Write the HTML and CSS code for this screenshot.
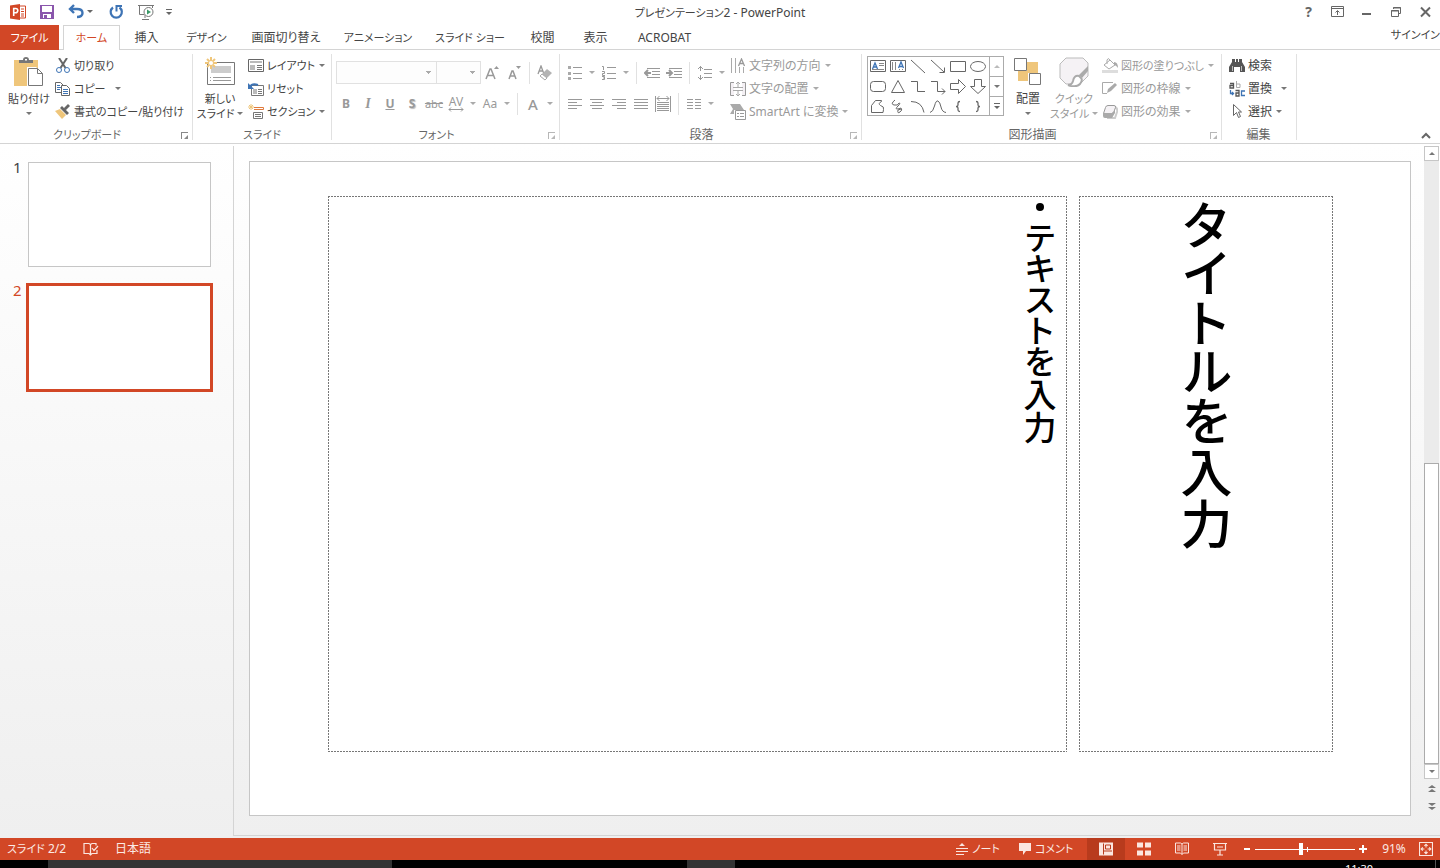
FILE: index.html
```html
<!DOCTYPE html>
<html lang="ja">
<head>
<meta charset="utf-8">
<title>プレゼンテーション2 - PowerPoint</title>
<link rel="stylesheet" href="styles.css">
</head>
<body>
<div class="app">
  <header class="titlebar">
    <div class="quick">
      <svg class="i16" viewBox="0 0 16 16"><path d="M9 2h6.500v12H9z" fill="#fff" stroke="#d24726"/><path d="M0 1.500 10 0v16L0 14.500z" fill="#d24726"/><path d="M3.700 12V4.500h2a2 2 0 0 1 0 4.200h-2" fill="none" stroke="#fff" stroke-width="1.600"/><path d="M11 5h3M11 7.500h3M11 10h3M11 12h3" stroke="#d24726"/></svg>
      <button class="qbtn q-save" aria-label="保存"><svg class="i14" viewBox="0 0 14 14"><path d="M0 0h14v14H0z" fill="#8a56ac"/><path d="M2 1h10v6H2zM3 9h8v4H3z" fill="#fff"/><path d="M4 10h3v3H4z" fill="#8a56ac"/></svg></button>
      <button class="qbtn q-undo" aria-label="元に戻す"><svg class="i16" viewBox="0 0 16 16"><path d="M6 1 2 5l4 4M2 5h7q5.500 0 5.500 4T9 13" fill="none" stroke="#3e74b5" stroke-width="2.400"/></svg></button>
      <button class="arr dark" aria-label="元に戻す一覧"></button>
      <button class="qbtn q-redo" aria-label="繰り返し"><svg class="i16" viewBox="0 0 16 16"><path d="M5 3.500A5.600 5.600 0 1 0 11.500 3.500" fill="none" stroke="#3e74b5" stroke-width="2.200"/><path d="M8.500 7.500V2H14" fill="none" stroke="#3e74b5" stroke-width="2"/></svg></button>
      <button class="qbtn q-show" aria-label="スライドショー"><svg class="i16" viewBox="0 0 16 16"><path d="M0 1.500h16M1.500 2v8.500H6M7 11v3M4 15.500h7M14.500 2v2" fill="none" stroke="#777"/><circle cx="10.500" cy="8" r="4.500" fill="#fff" stroke="#777"/><path d="M9 5.500 13 8l-4 2.500z" fill="#3a9a68"/></svg></button>
      <button class="custom" aria-label="クイック アクセスのカスタマイズ"></button>
    </div>
    <h1 class="title"><span class="kana">プレゼンテーション</span>2 - PowerPoint</h1>
    <div class="winbtns">
      <button aria-label="ヘルプ" class="help">?</button>
      <button aria-label="リボンの表示オプション"><svg class="i14" viewBox="0 0 14 12"><path d="M.5.500h12v10H.5zM1 2.500h12M6.500 9V5M4.500 6.500l2-2 2 2" fill="none" stroke="#666"/></svg></button>
      <button aria-label="最小化"><svg class="i14" viewBox="0 0 14 12"><path d="M2 7h9v2H2z" fill="#666"/></svg></button>
      <button aria-label="元のサイズに戻す"><svg class="i14" viewBox="0 0 14 12"><path d="M4.500 3V1.500h7v6H10M2.500 4.500h7v6h-7zM4 2h8M2 5h8" fill="none" stroke="#666"/></svg></button>
      <button aria-label="閉じる"><svg class="i14" viewBox="0 0 14 12"><path d="m3 1.500 9 9m0-9-9 9" fill="none" stroke="#666" stroke-width="2"/></svg></button>
    </div>
  </header>
  <nav class="tabs">
    <button class="tab file kana">ファイル</button>
    <button class="tab t57 active kana">ホーム</button>
    <button class="tab t53">挿入</button>
    <button class="tab t67 kana">デザイン</button>
    <button class="tab t92">画面切り替え</button>
    <button class="tab t92 kana">アニメーション</button>
    <button class="tab t92 kana">スライド ショー</button>
    <button class="tab t53">校閲</button>
    <button class="tab t53">表示</button>
    <button class="tab t85">ACROBAT</button>
    <a class="signin kana" href="#">サインイン</a>
  </nav>
  <section class="ribbon">
    <div class="group g-clip">
      <div class="body">
        <button class="big w54 paste">
          <svg class="i30" viewBox="0 0 30 30"><path d="M0 3h24v26H0z" fill="#efc67b"/><path d="M5 6V3h4q0-3 3-3t3 3h4v3z" fill="#777"/><path d="M11 2h2v1.500h-2z" fill="#fff"/><path d="M13 10h9l7 6v14H13z" fill="#fff"/><path d="M14.500 11.500h9l5 5v12h-14zM23.500 11.500v5h5" fill="#fff" stroke="#777"/></svg>
          <span class="kana">貼り付け</span><i class="tri"></i></button>
        <div class="rows">
          <button class="row kana"><svg class="i16" viewBox="0 0 16 16"><path d="m4 0 6.500 10M12 0 5.500 10" stroke="#666" stroke-width="2" fill="none"/><circle cx="4" cy="12" r="2.500" fill="#fff" stroke="#3e74b5"/><circle cx="12" cy="12" r="2.500" fill="#fff" stroke="#3e74b5"/></svg><span>切り取り</span></button>
          <button class="row kana"><svg class="i16" viewBox="0 0 16 16"><path d="M.5 1.500h5L8 4v7.500H.5z" fill="#fff" stroke="#666"/><path d="M2 4.500h3M2 6.500h4M2 8.500h3" stroke="#3e74b5"/><path d="M6.500 4.500h5l3 3v7h-8z" fill="#fff" stroke="#666"/><path d="M8 8.500h5M8 10.500h5M8 12.500h5" stroke="#3e74b5"/></svg><span>コピー</span><i class="tri far"></i></button>
          <button class="row kana"><svg class="i16" viewBox="0 0 16 16"><path d="m0 7 5-2 6 6-4 4z" fill="#efc67b"/><path d="m5 4 2-2 7 7-2 2zM9 4l4-4 2 2-4 4z" fill="#666"/></svg><span>書式のコピー/貼り付け</span></button>
        </div>
      </div>
      <div class="label kana">クリップボード<i class="launch"></i></div>
    </div>
    <div class="group g-slide">
      <div class="body">
        <button class="big w54 kana">
          <svg class="i30" viewBox="0 0 30 30"><path d="M2.500 5.500h27v22h-27z" fill="#fff" stroke="#777"/><path d="M6 9h20v7H6z" fill="#ccc"/><path d="M8 20.500h18M8 23.500h18M5 20.500h1M5 23.500h1" stroke="#999"/><path d="M6 0v12M0 6h12M2 2l8 8M10 2l-8 8" stroke="#efc67b" stroke-width="2"/><circle cx="6" cy="6" r="2" fill="#fff"/></svg>
          <span>新しい</span><span>スライド<i class="tri"></i></span></button>
        <div class="rows">
          <button class="row kana"><svg class="i16" viewBox="0 0 16 16"><path d="M.5 1.500h15v12H.500z" fill="#fff" stroke="#666"/><path d="M2 3h12v2H2zM2 7h5v5H2z" fill="#bbb"/><path d="M9 7.500h5M9 9.500h5M9 11.500h5" stroke="#777"/></svg><span>レイアウト</span><i class="tri"></i></button>
          <button class="row kana"><svg class="i16" viewBox="0 0 16 16"><path d="M3.500 4.500h12v10h-12z" fill="#fff" stroke="#777"/><path d="M5 8h4v5H5z" fill="#bbb"/><path d="M10 8.500h4M10 10.500h4M10 12.500h4" stroke="#777"/><path d="M2 6Q4 2 10 4" fill="none" stroke="#3e74b5" stroke-width="2"/><path d="M0 2v6h6z" fill="#3e74b5"/></svg><span>リセット</span></button>
          <button class="row kana"><svg class="i16" viewBox="0 0 16 16"><path d="M6 3.500h9.500v2H6" fill="none" stroke="#e07a3c"/><path d="M5.500 8.500h9v6h-9zM7 10.500h6M7 12.500h6" fill="none" stroke="#777"/><path d="M3 0v6M0 3h6M1 1l4 4M5 1 1 5" stroke="#efc67b"/></svg><span>セクション</span><i class="tri"></i></button>
        </div>
      </div>
      <div class="label kana">スライド</div>
    </div>
    <div class="group g-font off">
      <div class="body two">
        <div class="tools">
          <select class="combo face" aria-label="フォント" disabled><option></option></select>
          <select class="combo size" aria-label="フォント サイズ" disabled><option></option></select>
          <button class="tool" disabled aria-label="拡大"><svg class="i16" viewBox="0 0 16 16"><path d="m2 14 4-10h1l4 10M3.500 10.500h6" fill="none" stroke="#999" stroke-width="1.500"/><path d="M10 4h5l-2.500-3z" fill="#999"/></svg></button>
          <button class="tool" disabled aria-label="縮小"><svg class="i16" viewBox="0 0 16 16"><path d="m3 14 3-8h1l3 8M4 11h5" fill="none" stroke="#999" stroke-width="1.500"/><path d="M10 1h5l-2.500 3z" fill="#999"/></svg></button>
          <i class="sep"></i>
          <button class="tool" disabled aria-label="書式のクリア"><svg class="i16" viewBox="0 0 16 16"><path d="m1 9 3-8 3 8M2 6h4" fill="none" stroke="#999" stroke-width="1.300"/><path d="m3 11 7-7 5 4-7 7z" fill="#b3b3b3"/><path d="m3 11 2-2 5 4-2 2z" fill="#fff" stroke="#aaa"/></svg></button>
        </div>
        <div class="tools">
          <button class="tool" disabled><b>B</b></button><button class="tool it" disabled><b>I</b></button><button class="tool" disabled><b><u>U</u></b></button><button class="tool sh" disabled><b>S</b></button><button class="tool small" disabled><s>abc</s></button>
          <button class="tool av" disabled>AV<svg viewBox="0 0 16 5"><path d="M1 2.500h14M3 .5l-2 2 2 2M13 .5l2 2-2 2" fill="none" stroke="#999"/></svg></button><button class="arr" disabled aria-label="文字の間隔"></button>
          <button class="tool" disabled>Aa</button><button class="arr" disabled aria-label="文字種"></button><i class="sep"></i>
          <button class="tool color" disabled>A</button><button class="arr" disabled aria-label="フォントの色"></button>
        </div>
      </div>
      <div class="label kana">フォント<i class="launch"></i></div>
    </div>
    <div class="group g-para off">
      <div class="body">
        <div class="two fixed">
        <div class="tools">
          <button class="tool" disabled aria-label="箇条書き"><svg class="i14" viewBox="0 0 14 14"><path d="M5 1.500h9M5 7.500h9M5 12.500h9" stroke="#999"/><path d="M0 0h3v3H0zM0 6h3v3H0zM0 11h3v3H0z" fill="#aaa"/></svg></button><button class="arr" disabled aria-label="行頭文字"></button>
          <button class="tool" disabled aria-label="段落番号"><svg class="i14" viewBox="0 0 14 14"><path d="M5 1.500h9M5 7.500h9M5 12.500h9M0 .5h1.500V4M0 5.500h2.500v2H.5v2H3M0 10.500h2.500v3H0M1 12h1.500" fill="none" stroke="#999"/></svg></button><button class="arr" disabled aria-label="番号書式"></button>
          <i class="sep"></i>
          <button class="tool" disabled aria-label="インデントを減らす"><svg class="i16" viewBox="0 0 16 14"><path d="M3 2.500h13M8 5.500h8M8 8.500h8M3 11.500h13" stroke="#999"/><path d="M7 7H1M4 4 1 7l3 3" stroke="#999" stroke-width="2" fill="none"/></svg></button>
          <button class="tool" disabled aria-label="インデントを増やす"><svg class="i16" viewBox="0 0 16 14"><path d="M3 2.500h13M8 5.500h8M8 8.500h8M3 11.500h13" stroke="#999"/><path d="M0 7h6M3 4l3 3-3 3" stroke="#999" stroke-width="2" fill="none"/></svg></button>
          <i class="sep"></i>
          <button class="tool" disabled aria-label="行間"><svg class="i16" viewBox="0 0 16 16"><path d="M7 4.500h8M7 8.500h8M7 12.500h8M3.500 1v5M3.500 10v5M1 4l2.500-2.500L6 4M1 12l2.500 2.500L6 12" fill="none" stroke="#999"/></svg></button><button class="arr" disabled aria-label="行間一覧"></button>
        </div>
        <div class="tools">
          <button class="tool" disabled aria-label="左揃え"><svg class="i14" viewBox="0 0 14 12"><path d="M0 1.500h14M0 4.500h9M0 7.500h14M0 10.500h9" stroke="#999"/></svg></button>
          <button class="tool" disabled aria-label="中央揃え"><svg class="i14" viewBox="0 0 14 12"><path d="M0 1.500h14M2 4.500h10M0 7.500h14M2 10.500h10" stroke="#999"/></svg></button>
          <button class="tool" disabled aria-label="右揃え"><svg class="i14" viewBox="0 0 14 12"><path d="M0 1.500h14M5 4.500h9M0 7.500h14M5 10.500h9" stroke="#999"/></svg></button>
          <button class="tool" disabled aria-label="両端揃え"><svg class="i14" viewBox="0 0 14 12"><path d="M0 1.500h14M0 4.500h14M0 7.500h14M0 10.500h14" stroke="#999"/></svg></button>
          <button class="tool" disabled aria-label="均等割り付け"><svg class="i16" viewBox="0 0 16 16"><path d="M.5 0v16M15.500 0v16M2 6.500h12M2 8.500h12M2 10.500h12M2 12.500h12M2 14.500h12M2 2.500h12M4.500 0 2 2.500 4.500 5M11.500 0 14 2.500 11.500 5" fill="none" stroke="#999"/></svg></button>
          <i class="sep"></i>
          <button class="tool" disabled aria-label="段組み"><svg class="i14" viewBox="0 0 14 12"><path d="M0 1.500h6M0 4.500h6M0 7.500h6M0 10.500h6M8 1.500h6M8 4.500h6M8 7.500h6M8 10.500h6" stroke="#999"/></svg></button><button class="arr" disabled aria-label="段組み一覧"></button>
        </div>
        </div>
        <div class="rows">
          <button class="row" disabled><svg class="i16" viewBox="0 0 16 16"><path d="M1.500 0v15M5.500 0v15M9.500 9v6M13.500 9v6" stroke="#aaa"/><path d="m8.500 8 3-7 3 7M9.500 5.500h4" fill="none" stroke="#999" stroke-width="1.300"/></svg><span>文字列の方向</span><i class="tri"></i></button>
          <button class="row" disabled><svg class="i16" viewBox="0 0 16 16"><path d="M4 1.500H.5v13H4M12 1.500h3.500v13H12" fill="#f4f0f4" stroke="#999"/><path d="M3 6.500h10M3 9.500h10M8 6V1M6 3l2-2 2 2M8 10v5M6 13l2 2 2-2" fill="none" stroke="#aaa"/></svg><span>文字の配置</span><i class="tri"></i></button>
          <button class="row" disabled><svg class="i16" viewBox="0 0 16 16"><path d="M0 0h10l4 6H4v4H0l3-5z" fill="#aaa"/><path d="M5.500 6.500h10v9h-10z" fill="#fff" stroke="#999"/><path d="M7 9.500h2M10 9.500h4M7 12.500h2M10 12.500h4" stroke="#999"/></svg><span>SmartArt に変換</span><i class="tri"></i></button>
        </div>
      </div>
      <div class="label">段落<i class="launch"></i></div>
    </div>
    <div class="group g-draw">
      <div class="body">
        <div class="gallery">
          <div class="shapes">
            <svg viewBox="0 0 20 20"><path d="M2.500 3.500h15v11h-15z" fill="none" stroke="#666"/><path d="m4.500 12 2.500-6 2.500 6M5 10h4" fill="none" stroke="#3e74b5" stroke-width="1.300"/><path d="M11 6.500h5M11 8.500h5M4 12.500h12" stroke="#888"/></svg>
            <svg viewBox="0 0 20 20"><path d="M2.500 3.500h15v11h-15z" fill="none" stroke="#666"/><path d="m10.500 11 2.500-6 2.500 6M11 9.500h4" fill="none" stroke="#3e74b5" stroke-width="1.300"/><path d="M4.500 5v8M7.500 5v8M11.500 12v1M14.500 12v1" stroke="#888"/></svg>
            <svg viewBox="0 0 20 20"><path d="m3 3 14 13" fill="none" stroke="#666"/></svg>
            <svg viewBox="0 0 20 20"><path d="m3 3 13 12M16.500 10.500v5h-5" fill="none" stroke="#666"/></svg>
            <svg viewBox="0 0 20 20"><path d="M2.500 4.500h15v10h-15z" fill="none" stroke="#666"/></svg>
            <svg viewBox="0 0 20 20"><ellipse cx="10" cy="9.500" rx="7.500" ry="5" fill="none" stroke="#666"/></svg>
            <svg viewBox="0 0 20 20"><rect x="2.500" y="4.500" width="15" height="10" rx="3" fill="none" stroke="#666"/></svg>
            <svg viewBox="0 0 20 20"><path d="M10 3.500 16.500 15.500h-13z" fill="none" stroke="#666"/></svg>
            <svg viewBox="0 0 20 20"><path d="M3 4.500h6.500v10H17" fill="none" stroke="#666"/></svg>
            <svg viewBox="0 0 20 20"><path d="M3 4.500h6.500v10H17M14 11.500l3 3-3 3" fill="none" stroke="#666"/></svg>
            <svg viewBox="0 0 20 20"><path d="M2.500 6.500h8v-4l7 7-7 7v-4h-8z" fill="none" stroke="#666"/></svg>
            <svg viewBox="0 0 20 20"><path d="M6.500 2.500h7v7h4l-7.500 7-7.500-7h4z" fill="none" stroke="#666"/></svg>
            <svg viewBox="0 0 20 20"><path d="M15 15.500H3.500v-7l4-5h6v1q-4 2-1 4 4 1 3 4z" fill="none" stroke="#666"/></svg>
            <svg viewBox="0 0 20 20"><path d="M7 3Q2 7 6 8t5-2q2 0-1 3t-1 3 4-1q2 2-1 4t-2-2l3-1" fill="none" stroke="#666"/></svg>
            <svg viewBox="0 0 20 20"><path d="M3 4.500q11 0 13 11" fill="none" stroke="#666"/></svg>
            <svg viewBox="0 0 20 20"><path d="M2 15.500Q5 15 6.500 9t3.500-5q2 1 3 6t5 5.500" fill="none" stroke="#666"/></svg>
            <svg viewBox="0 0 20 20"><path d="M12 4.500q-2 0-2 1.500v2q0 1.500-2 1.500 2 0 2 1.500v2q0 1.500 2 1.500" fill="none" stroke="#666" stroke-width="1.300"/></svg>
            <svg viewBox="0 0 20 20"><path d="M8 4.500q2 0 2 1.500v2q0 1.500 2 1.500-2 0-2 1.500v2q0 1.500-2 1.500" fill="none" stroke="#666" stroke-width="1.300"/></svg>
          </div>
          <div class="gscroll"><button aria-label="上へ"><i class="tri up"></i></button><button aria-label="下へ"><i class="tri"></i></button><button aria-label="その他"><i class="more"></i></button></div>
        </div>
        <button class="big w46">
          <svg class="i30" viewBox="0 0 30 30"><path d="M14 5h11v11H14zM5 14h10v10H5z" fill="#efc67b"/><path d="M1.500 1.500h12v12h-12zM16.500 16.500h11v11h-11z" fill="#fff" stroke="#777"/></svg>
          <span>配置</span><i class="tri"></i></button>
        <button class="big w46 grey kana" disabled>
          <svg class="i30" viewBox="0 0 30 30"><path d="M7 1h17l5 5v13l-8 8H7l-6-6V7z" fill="#f5f2f5" stroke="#bbb"/><path d="m29 9-9 9 3 3 6-7z" fill="#aaa"/><path d="M20 19q-5-1-6 5-1 4-5 4 8 3 12-1 3-4 1-6z" fill="#fff" stroke="#aaa" stroke-width="2"/></svg>
          <span>クイック</span><span>スタイル<i class="tri"></i></span></button>
        <div class="rows grey">
          <button class="row" disabled><svg class="i16" viewBox="0 0 16 16"><path d="M0 12h16v3H0z" fill="#ddd"/><path d="m2 7 6-5 5 5-6 4zM8 2q-2-3-3 0v4" fill="#fff" stroke="#aaa"/><path d="M12 4q4 0 4 6-2-3-4-3z" fill="#aaa"/></svg><span class="kana">図形の塗りつぶし</span><i class="tri"></i></button>
          <button class="row" disabled><svg class="i16" viewBox="0 0 16 16"><path d="M11 1.500H.5v11H5" fill="none" stroke="#aaa"/><path d="m5 12 1-4 7-6 2 2-6 6z" fill="#aaa"/></svg><span>図形の枠線</span><i class="tri"></i></button>
          <button class="row" disabled><svg class="i16" viewBox="0 0 16 16"><path d="M13 3q3 1 2 5l-2 6H5" fill="none" stroke="#ccc" stroke-width="2"/><path d="M6 1.500h6q2 0 1.500 2l-1.500 4q-1 2-2 2H1.500l2-6Q4 1.500 6 1.500z" fill="#f5f2f5" stroke="#999"/><path d="M1 9h9l3-3v3l-3 5H3q-2 0-2-2z" fill="#aaa"/></svg><span>図形の効果</span><i class="tri"></i></button>
        </div>
      </div>
      <div class="label">図形描画<i class="launch"></i></div>
    </div>
    <div class="group g-edit">
      <div class="body"><div class="rows">
        <button class="row"><svg class="i16" viewBox="0 0 16 16"><path d="M3 1h3v3h1V1h2v3h1V1h3v3l3 5v5h-5V9H5v5H0V9l3-5z" fill="#555"/><path d="M3.500 8v5M12.500 8v5" stroke="#bbb"/></svg><span>検索</span></button>
        <button class="row"><svg class="i16" viewBox="0 0 16 16"><g fill="none" stroke="#555" stroke-width="1.300"><path d="M1 2.500h3.500V7H1V4.500h3.500M6.500 9.500H10V15H7v-3h3"/></g><path d="M7.500 0v6.500H11V3H7.500" fill="none" stroke="#aaa"/><path d="M16 10h-3.500v4.500H16M1.500 9v3.500H4M3 11l1.500 1.500L3 14" fill="none" stroke="#3e74b5" stroke-width="1.300"/></svg><span>置換</span><i class="tri far"></i></button>
        <button class="row"><svg class="i16" viewBox="0 0 16 16"><path d="M4.500.5v11l3-3 2 5 2-1-2-4.500h3z" fill="#fff" stroke="#666"/></svg><span>選択</span><i class="tri"></i></button>
      </div></div>
      <div class="label">編集</div>
    </div>
    <button class="collapse" aria-label="リボンを折りたたむ"><svg viewBox="0 0 10 7"><path d="m1 6 4-4 4 4" fill="none" stroke="#666" stroke-width="2"/></svg></button>
  </section>
  <main class="work">
    <aside class="thumbs">
      <div class="thumb"><span>1</span><button class="mini" aria-label="スライド 1"></button></div>
      <div class="thumb sel"><span>2</span><button class="mini" aria-label="スライド 2"></button></div>
    </aside>
    <div class="stage">
      <article class="slide">
        <ul class="holder text"><li>テキストを入力</li></ul>
        <h2 class="holder heading">タイトルを入力</h2>
      </article>
      <div class="scroll">
        <button class="sbtn" aria-label="上へスクロール"><i class="tri up"></i></button>
        <div class="track"><div class="knob"></div></div>
        <button class="sbtn" aria-label="下へスクロール"><i class="tri"></i></button>
        <button class="jump" aria-label="前のスライド"><i class="tri up"></i><i class="tri up"></i></button>
        <button class="jump" aria-label="次のスライド"><i class="tri"></i><i class="tri"></i></button>
      </div>
    </div>
  </main>
  <footer class="status">
    <span class="count"><span class="kana">スライド</span> 2/2</span>
    <button class="spell" aria-label="スペルチェック"><svg class="i16" viewBox="0 0 16 14"><path d="M7.500 12V2.500L6 1.500H1v10h5l1.500 1.500 1.500-1.500h2M7.500 2.500 9 1.500h4v2M9 6l2 2.500L15 4M14 8v3.500h-4" fill="none" stroke="#fbe6e0" stroke-width="1.200"/></svg></button>
    <span class="lang">日本語</span>
    <button class="note kana"><svg class="i12" viewBox="0 0 12 12"><path d="M3 3h6L6 0zM0 5h12v1H0zM0 8h12v1H0zM0 11h8v1H0z" fill="#fbe6e0"/></svg>ノート</button>
    <button class="comment kana"><svg class="i12" viewBox="0 0 12 12"><path d="M0 0h12v8H7l-3 4V8H0z" fill="#fbe6e0"/></svg>コメント</button>
    <button class="view on" aria-label="標準"><svg class="i14" viewBox="0 0 14 13"><path d="M0 0h14v13H0z" fill="#fbe6e0"/><path d="M4 1h1v11H4zM5 8h8v1H5z" fill="#b83b1d"/><path d="M6.500 2.500h5v4h-5z" fill="#fbe6e0" stroke="#b83b1d"/></svg></button>
    <button class="view" aria-label="スライド一覧"><svg class="i14" viewBox="0 0 14 13"><path d="M0 0h6v5H0zM8 0h6v5H8zM0 8h6v5H0zM8 8h6v5H8z" fill="#fbe6e0"/></svg></button>
    <button class="view" aria-label="閲覧表示"><svg class="i14" viewBox="0 0 14 13"><path d="M.5.500h5L7 1.500 8.500.500h5v10h-5L7 12 5.500 10.500h-5zM7 1.500V12M2 3.500h3.500M2 5.500h3.500M2 7.500h3.500M8.500 3.500H12M8.500 5.500H12M8.500 7.500H12" fill="none" stroke="#fbe6e0"/></svg></button>
    <button class="view" aria-label="スライド ショー"><svg class="i14" viewBox="0 0 14 13"><path d="M0 1h14M1.500 1.500v6h11v-6M4 4.500h6M7 8v4M4 12.500h6" fill="none" stroke="#fbe6e0" stroke-width="1.200"/></svg></button>
    <button class="zbtn" aria-label="縮小"><svg viewBox="0 0 8 8"><path d="M1 3h6v2H1z" fill="#fff"/></svg></button>
    <input class="zoom" type="range" aria-label="ズーム" min="0" max="100" value="46">
    <button class="zbtn" aria-label="拡大"><svg viewBox="0 0 8 8"><path d="M0 3h3V0h2v3h3v2H5v3H3V5H0z" fill="#fff"/></svg></button>
    <button class="pct">91%</button>
    <button class="fit" aria-label="ウィンドウに合わせる"><svg class="i14" viewBox="0 0 13 13"><path d="M.5.500h12v12H.5zM6.500 2v3M6.500 8v3M2 6.500h3M8 6.500h3M5 3.500l1.500-1.500L8 3.500M5 9.500 6.500 11 8 9.500M3.500 5 2 6.500 3.500 8M9.500 5 11 6.500 9.500 8" fill="none" stroke="#fbe6e0"/></svg></button>
  </footer>
  <div class="taskbar"><i class="search"></i><i class="task"></i><span class="clock">11:30</span><i class="peek"></i></div>
</div>
</body>
</html>
```
FILE: styles.css
```css
* { box-sizing: border-box; }
html, body { height: 100%; margin: 0; }
body { font: 12px/16px "Noto Sans", "Noto Sans CJK JP", sans-serif; font-feature-settings: "palt"; color: #444; overflow: hidden; }
button { font: inherit; font-feature-settings: inherit; color: inherit; background: none; border: 0; padding: 0; margin: 0; white-space: nowrap; }
svg { display: block; flex: none; }
.kana { font-size: 11px; }
.i12 { width: 12px; height: 12px; }
.i14 { width: 14px; height: 14px; }
.i16 { width: 16px; height: 16px; }
.i30 { width: 30px; height: 30px; }
.app { display: flex; flex-direction: column; height: 100vh; background: #fff; }

.tri { display: inline-block; flex: none; width: 6px; height: 3px; border: solid transparent; border-width: 3px 3px 0; border-top-color: #777; }
.tri.up { border-width: 0 3px 3px; border-bottom-color: #777; }
.arr { width: 12px; height: 20px; display: flex; align-items: center; justify-content: center; }
.arr::after { content: ""; border: solid transparent; border-width: 3px 3px 0; border-top-color: #aaa; }
.arr.dark::after { border-top-color: #666; }

.titlebar { display: grid; grid-template-columns: 1fr auto 1fr; align-items: center; height: 25px; flex: none; }
.quick { display: flex; align-items: center; padding: 0 0 2px 10px; }
.qbtn { display: flex; }
.q-save, .q-undo, .q-show { margin-left: 14px; }
.q-redo { margin-left: 12px; }
.custom { margin-left: 12px; width: 6px; height: 6px; border-top: 1px solid #666; display: flex; align-items: flex-end; }
.custom::after { content: ""; border: solid transparent; border-width: 3px 3px 0; border-top-color: #666; }
.title { margin: 0; font: inherit; font-feature-settings: inherit; }
.winbtns { display: flex; justify-content: flex-end; padding: 0 1px 2px 0; }
.winbtns button { width: 29px; height: 22px; display: flex; align-items: center; justify-content: center; }
.winbtns .help { font-size: 14px; font-weight: 700; color: #666; }

.tabs { display: flex; height: 25px; flex: none; border-bottom: 1px solid #d4d4d4; }
.tab { height: 25px; text-align: center; }
.file { width: 59px; margin-right: 4px; background: #d24726; color: #fff; }
.active { background: #fff; border: 1px solid #d4d4d4; border-bottom: 0; color: #d24726; }
.t53 { width: 53px; }
.t57 { width: 57px; }
.t67 { width: 67px; }
.t85 { width: 85px; }
.t92 { width: 92px; }
.signin { margin-left: auto; color: #444; text-decoration: none; white-space: nowrap; line-height: 20px; }

.ribbon { display: flex; height: 94px; flex: none; padding: 4px 0 3px; border-bottom: 1px solid #d4d4d4; }
.group { display: flex; flex-direction: column; flex: none; border-right: 1px solid #e1e1e1; }
.g-clip { width: 193px; }
.g-slide { width: 139px; }
.g-font { width: 228px; }
.g-para { width: 302px; }
.g-draw { width: 360px; }
.g-edit { width: 75px; padding-left: 6px; }
.body { display: flex; height: 69px; flex: none; }
.label { position: relative; text-align: center; line-height: 23px; color: #666; padding-right: 18px; }
.g-slide .label { padding-right: 0; }
.g-edit .label { padding-right: 7px; }
.launch { position: absolute; right: 4px; bottom: 7px; width: 7px; height: 7px; border: solid #888; border-width: 1px 0 0 1px; }
.launch::after { content: ""; position: absolute; right: 0; bottom: 0; border: 2px solid #888; border-top-color: transparent; border-left-color: transparent; }
.off .launch, .g-draw .launch { opacity: .6; }
.big { display: flex; flex-direction: column; align-items: center; padding-top: 3px; line-height: 15px; }
.big svg { margin-bottom: 4px; }
.big > .tri { margin-top: 6px; }
.big span { display: flex; align-items: center; gap: 3px; }
.w54 { width: 54px; }
.w46 { width: 46px; }
.paste { padding-left: 4px; }
.grey, .off .row { color: #999; }
.grey .tri, .off .tri { border-top-color: #aaa; }
.rows { display: flex; flex-direction: column; align-items: flex-start; padding-left: 1px; }
.w46 + .rows { padding-left: 5px; }
.row { display: flex; align-items: center; gap: 3px; height: 23px; }
.row .tri { margin-left: 1px; }
.row .far { margin-left: 6px; }

.two { display: flex; flex-direction: column; padding: 3px 0 0 3px; }
.fixed { width: 169px; flex: none; padding-left: 4px; }
.tools { display: flex; align-items: center; height: 31px; color: #999; }
.tool { width: 22px; height: 22px; display: flex; align-items: center; justify-content: center; flex: none; }
.tool.it { font-family: "Liberation Serif", serif; font-style: italic; font-size: 14px; }
.sh { text-shadow: 1px 1px 1px #bbb; }
.small { font-size: 11px; }
.av { flex-direction: column; line-height: 11px; }
.av svg { width: 16px; height: 5px; }
.color { font-size: 15px; font-weight: 500; }
.sep { width: 1px; height: 22px; margin: 0 4px; background: #e1e1e1; flex: none; }
.combo { appearance: none; height: 23px; border: 1px solid #e1e1e1; border-radius: 0; margin: 0; background: linear-gradient(#aaa, #aaa) no-repeat right 5px top 9px / 5px 1px, linear-gradient(#aaa, #aaa) no-repeat right 6px top 10px / 3px 1px, linear-gradient(#aaa, #aaa) no-repeat right 7px top 11px / 1px 1px, #fdfdfd; opacity: 1; }
.face { width: 101px; margin-left: 1px; }
.size { width: 45px; margin-left: -1px; }

.gallery { display: flex; width: 137px; height: 60px; margin: 2px 0 0 5px; border: 1px solid #ababab; flex: none; }
.shapes { display: grid; grid-template-columns: repeat(6, 20px); grid-auto-rows: 20px; width: 121px; height: 58px; overflow: hidden; }
.shapes svg { width: 20px; height: 20px; }
.gscroll { width: 14px; display: grid; grid-template-rows: repeat(3, 1fr); border-left: 1px solid #ababab; }
.gscroll button { display: flex; align-items: center; justify-content: center; }
.gscroll button + button { border-top: 1px solid #ababab; }
.gscroll .up { border-bottom-color: #bbb; }
.more { width: 6px; height: 6px; border-top: 1px solid #666; display: flex; align-items: flex-end; }
.more::after { content: ""; border: solid transparent; border-width: 3px 3px 0; border-top-color: #666; }
.gallery + .big { margin-left: 1px; }
.collapse { margin: auto 9px 1px auto; }
.collapse svg { width: 10px; height: 7px; }

.work { flex: 1; min-height: 0; display: flex; padding: 2px 0; background: linear-gradient(#fff, #efefef); }
.thumbs { width: 234px; flex: none; border-right: 1px solid #d4d4d4; padding-top: 16px; }
.thumb { display: flex; align-items: flex-start; padding-left: 13px; height: 123px; font-size: 15px; line-height: 10px; gap: 6px; }
.thumb span { width: 9px; }
.mini { width: 183px; height: 105px; background: #fff; border: 1px solid #c6c6c6; }
.sel { color: #d24726; }
.sel .mini { outline: 3px solid #d24726; outline-offset: -1px; border: 0; }
.stage { flex: 1; min-width: 0; display: flex; gap: 13px; padding-left: 15px; border-bottom: 1px solid #d4d4d4; }
.slide { flex: 1; margin: 15px 0 19px; background: #fff; border: 1px solid #c6c6c6; display: grid; grid-template-columns: 739fr 254fr; gap: 12px; padding: 34px 77px 63px 78px; color: #000; }
.holder {
  --across: repeating-linear-gradient(to right, #777 0 2px, transparent 2px 3px);
  --down: repeating-linear-gradient(to bottom, #777 0 2px, transparent 2px 3px);
  margin: 0;
  background: var(--across) top / 100% 1px no-repeat, var(--across) bottom / 100% 1px no-repeat, var(--down) left / 1px 100% no-repeat, var(--down) right / 1px 100% no-repeat;
  writing-mode: vertical-rl; font-family: "Noto Sans CJK JP", sans-serif; font-feature-settings: "vpal"; font-weight: 500;
}
.text { padding: 5px 10px; font-size: 33px; line-height: 34px; list-style: none; }
.text li::before { content: ""; display: inline-block; width: 8px; height: 8px; margin: 2px 0 11px; border-radius: 50%; background: #000; }
.heading { display: flex; flex-direction: column; justify-content: center; padding-top: 4px; font-size: 52px; line-height: 60px; }
.scroll { width: 16px; display: flex; flex-direction: column; align-items: center; padding-right: 1px; }
.sbtn { width: 15px; height: 15px; border: 1px solid #c6c6c6; background: #fff; display: flex; align-items: center; justify-content: center; flex: none; }
.track { flex: 1; width: 15px; background: #ebebeb; display: flex; flex-direction: column; justify-content: flex-end; }
.knob { height: 50%; min-height: 20px; border: 1px solid #ababab; background: #fff; }
.jump { display: flex; flex-direction: column; gap: 1px; padding: 6px 5px 5px; height: 18px; }
.jump .tri { border-left-width: 4px; border-right-width: 4px; width: 8px; margin: 0 -1px; }
.jump:last-child { margin-bottom: 20px; }

.status { display: flex; align-items: center; height: 22px; flex: none; background: #d24726; color: #fbeae5; padding-left: 7px; line-height: 18px; }
.count { width: 76px; }
.spell { width: 32px; }
.note, .comment { display: flex; align-items: center; gap: 4px; }
.note { margin-left: auto; width: 63px; }
.comment { width: 68px; }
.view { width: 38px; height: 22px; display: flex; align-items: center; justify-content: center; }
.on { background: #b83b1d; }
.zbtn { width: 16px; display: flex; justify-content: center; }
.zbtn svg { width: 8px; height: 8px; }
.zoom { appearance: none; width: 100px; height: 16px; margin: 0; background: linear-gradient(#fff, #fff) no-repeat 52px center / 1px 5px, linear-gradient(#fff, #fff) no-repeat center / 100% 1px; }
.zoom::-webkit-slider-thumb { appearance: none; width: 4px; height: 12px; background: #fff; }
.pct { width: 46px; }
.fit { margin: 0 7px 0 2px; }
.taskbar { height: 8px; flex: none; display: flex; background: #000; overflow: hidden; }
.search { width: 344px; margin-left: 48px; background: #333; }
.task { width: 48px; margin-left: 295px; background: #333; }
.clock { margin-left: auto; font-size: 11px; color: #fff; line-height: 18px; }
.peek { width: 1px; margin: 0 4px 0 62px; background: #555; }
```
